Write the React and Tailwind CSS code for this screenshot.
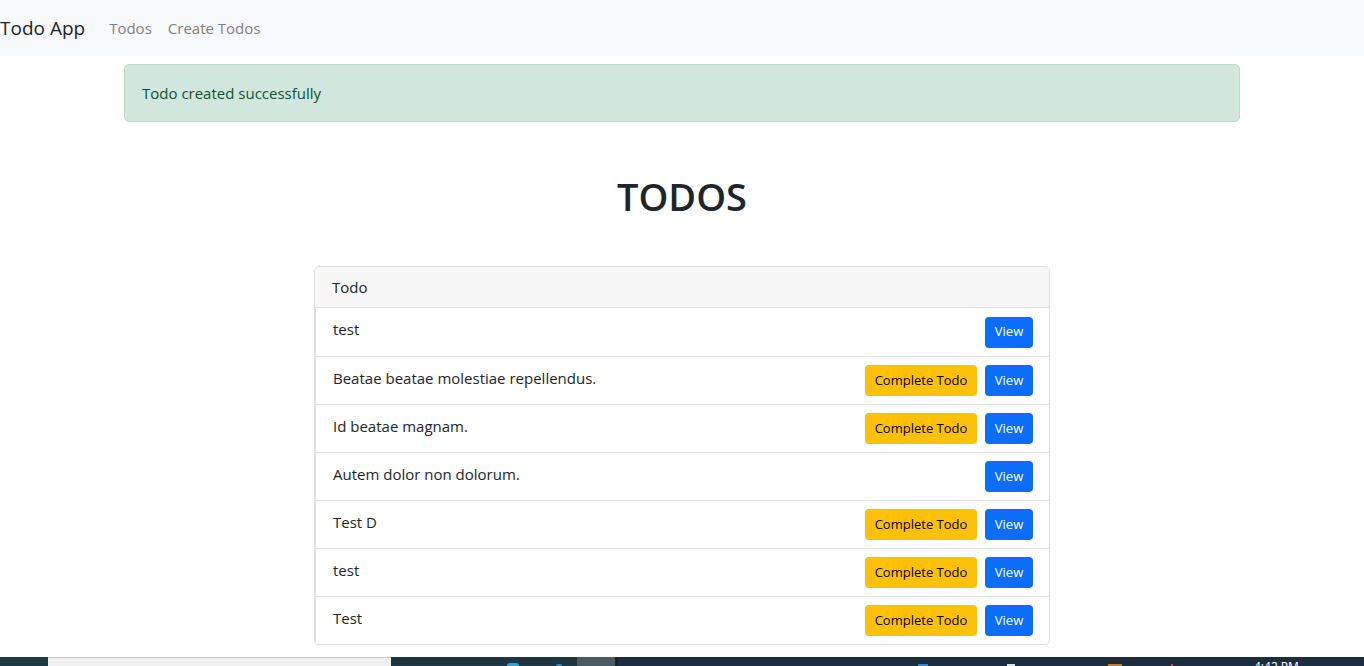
import React from "react";

const todos = [
  { id: 1, title: "test", completed: true },
  { id: 2, title: "Beatae beatae molestiae repellendus.", completed: false },
  { id: 3, title: "Id beatae magnam.", completed: false },
  { id: 4, title: "Autem dolor non dolorum.", completed: true },
  { id: 5, title: "Test D", completed: false },
  { id: 6, title: "test", completed: false },
  { id: 7, title: "Test", completed: false },
];

const fontStack = {
  fontFamily: '"Segoe UI", "Open Sans", "Noto Sans", sans-serif',
};

function Navbar() {
  return (
    <nav className="h-[56px] bg-[#f8f9fa] flex items-center">
      <a className="text-[19px] text-[#212529] pr-[16px]">Todo App</a>
      <a className="text-[15px] text-[#7d7f82] px-[8px]">Todos</a>
      <a className="text-[15px] text-[#7d7f82] px-[8px]">Create Todos</a>
    </nav>
  );
}

function TodoRow({ todo }) {
  return (
    <li className="h-[48px] border-t border-[#dfdfdf] first:border-t-0 flex items-center justify-between pl-[17px] pr-[16px]">
      <span className="text-[15px] text-[#212529] -mt-[5px]">{todo.title}</span>
      <div className="flex gap-[8px]">
        {!todo.completed && (
          <button
            type="button"
            className="h-[31px] w-[112px] rounded-[4px] bg-[#ffc107] text-[13px] text-black"
          >
            Complete Todo
          </button>
        )}
        <button
          type="button"
          className="h-[31px] w-[48px] rounded-[4px] bg-[#0d6efd] text-[13px] text-white"
        >
          View
        </button>
      </div>
    </li>
  );
}

function Taskbar() {
  return (
    <div className="h-[9px] flex overflow-hidden bg-[#1d2f3d]">
      <div className="w-[48px] bg-[#1f3942]" />
      <div className="w-[343px] bg-[#f0f0f0] border-t border-[#c6c6c6]" />
      <div className="w-[186px] bg-[#1f3540] relative">
        <div className="absolute left-[116px] top-[6px] w-[12px] h-[3px] bg-[#2aa7d6] rounded-t" />
        <div className="absolute left-[165px] top-[7px] w-[6px] h-[2px] bg-[#2f87c4] rounded-t" />
      </div>
      <div className="w-[38px] bg-[#4b5b62]" />
      <div className="w-[3px] bg-[#14232c]" />
      <div className="flex-1 bg-[#1c2d3e] relative">
        <div className="absolute left-[300px] top-[7px] w-[10px] h-[2px] bg-[#3d7fd0]" />
        <div className="absolute left-[389px] top-[7px] w-[8px] h-[2px] bg-[#e0e0e0]" />
        <div className="absolute left-[490px] top-[7px] w-[14px] h-[2px] bg-[#c77a2c]" />
        <div className="absolute left-[553px] top-[7px] w-[2px] h-[2px] bg-[#d44]" />
        <div className="absolute left-[636px] top-[4px] text-[12px] leading-[12px] text-white">
          4:42 PM
        </div>
      </div>
    </div>
  );
}

export default function App() {
  return (
    <div style={fontStack} className="bg-white h-[666px] flex flex-col overflow-hidden">
      <div className="flex-1">
        <Navbar />

        <div className="w-[1116px] mx-auto">
          <div className="mt-[8px] h-[58px] flex items-center px-[17px] rounded-[5px] border border-[#badbcc] bg-[#d1e7dd] text-[15px] text-[#0f5132]">
            Todo created successfully
          </div>

          <h1 className="text-center text-[38px] font-semibold text-[#212529] leading-[48px] mt-[50px]">
            TODOS
          </h1>

          <div className="w-[736px] mx-auto mt-[46px] border border-[#dfdfdf] rounded-[5px] overflow-hidden">
            <div className="h-[41px] bg-[#f7f7f7] border-b border-[#dfdfdf] flex items-center px-[17px] text-[15px] text-[#212529]">
              Todo
            </div>
            <ul className="border-l border-[#dfdfdf]">
              {todos.map((todo) => (
                <TodoRow key={todo.id} todo={todo} />
              ))}
            </ul>
          </div>
        </div>
      </div>
      <Taskbar />
    </div>
  );
}
